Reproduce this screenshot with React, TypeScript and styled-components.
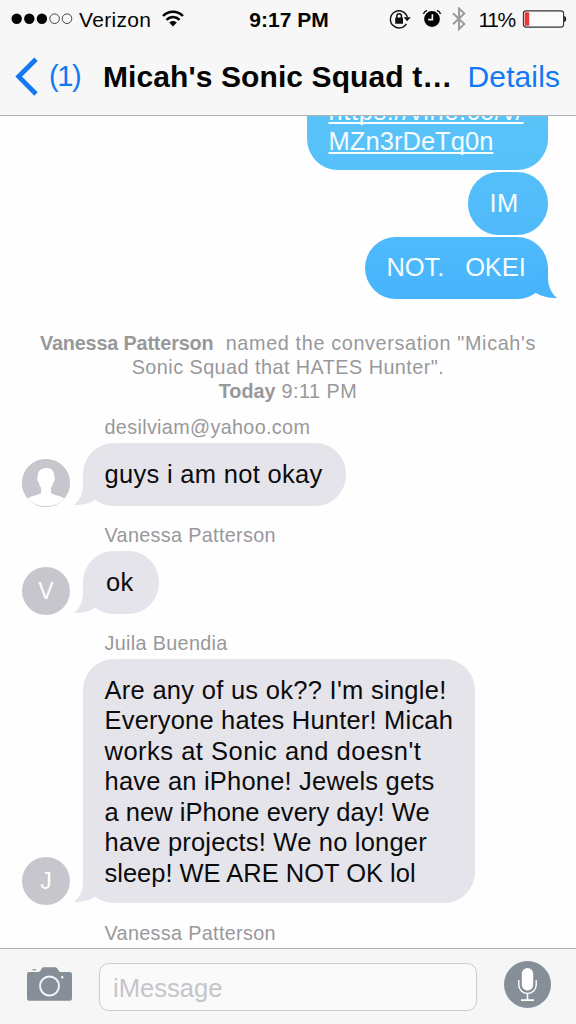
import React from "react";
import styled, { createGlobalStyle, css } from "styled-components";

const GlobalStyle = createGlobalStyle`
  * { box-sizing: border-box; }
  body {
    margin: 0;
    background: #fefefe;
    font-family: "Liberation Sans", Arial, sans-serif;
    color: #0b0b0d;
  }
`;

const BLUE = "#1279f2";
const GREY = "#e5e4ea";

const Screen = styled.div`
  width: 576px;
  height: 1024px;
  display: flex;
  flex-direction: column;
  overflow: hidden;
  background: #fefefe;
`;

const Header = styled.header`
  flex: none;
  height: 116px;
  background: #f7f7f7;
  border-bottom: 1px solid #b0b0b2;
`;

const StatusBar = styled.div`
  height: 38px;
  display: grid;
  grid-template-columns: 1fr auto 1fr;
  align-items: center;
  padding: 0 9px 0 11px;
  font-size: 21px;
  line-height: 37px;
  color: #050505;
`;

const StatusGroup = styled.div<{ $end?: boolean }>`
  display: flex;
  align-items: center;
  height: 37px;
  justify-content: ${(p) => (p.$end ? "flex-end" : "flex-start")};
  svg { flex: none; display: block; }
`;

const StatusIcons = styled.div`
  display: flex;
  align-items: center;
  gap: 10.5px;
`;

const Carrier = styled.span`
  margin: 0 11px 0 6px;
  letter-spacing: 0.3px;
`;

const Clock = styled.span`
  font-weight: bold;
  font-size: 21px;
`;

const Percent = styled.span`
  margin: 0 7px 0 12px;
  letter-spacing: -1.3px;
`;

const NavBar = styled.nav`
  height: 77px;
  display: flex;
  align-items: center;
  padding: 0 16px 0 14px;
  font-size: 30px;
  line-height: 77px;
  white-space: nowrap;
`;

const BackButton = styled.a`
  display: flex;
  align-items: center;
  width: 89px;
  gap: 10px;
  color: ${BLUE};
  svg { display: block; }
`;

const Count = styled.span`
  font-size: 29px;
  letter-spacing: -1.4px;
`;

const Title = styled.h1`
  margin: 0;
  flex: 1;
  font-size: 30px;
  font-weight: bold;
  letter-spacing: 0.1px;
  color: #050505;
`;

const DetailsLink = styled.a`
  color: ${BLUE};
  letter-spacing: 0.1px;
`;

const Thread = styled.main`
  flex: 1;
  min-height: 0;
  overflow: hidden;
  display: flex;
  flex-direction: column;
`;

const Sent = styled.section`
  display: flex;
  flex-direction: column;
  align-items: flex-end;
  gap: 2.2px;
  margin-top: -39px;
  padding-right: 28px;
`;

const Bubble = styled.div<{ $w: number; $bg: string; $sent?: boolean; $pad?: number }>`
  position: relative;
  width: ${(p) => p.$w}px;
  padding: 15.5px 0 ${(p) => (p.$sent ? 16.5 : 15)}px ${(p) => p.$pad ?? 21.5}px;
  min-height: 62.5px;
  border-radius: 31px;
  background: ${(p) => p.$bg};
  color: ${(p) => (p.$sent ? "#f6fcff" : "#0b0b0d")};
  font-size: 25.5px;
  line-height: 30.5px;
  white-space: pre;
`;

const LinkBubble = styled(Bubble)`
  padding-top: 18.5px;
  padding-bottom: 13.5px;
`;

const Line = styled.div<{ $ls?: number }>`
  letter-spacing: ${(p) => p.$ls ?? 0.3}px;
`;

const LinkLine = styled(Line)`
  text-decoration: underline;
  text-decoration-thickness: 1.5px;
  text-underline-offset: 2px;
  text-decoration-skip-ink: none;
`;

const TailSvg = styled.svg<{ $sent?: boolean }>`
  position: absolute;
  bottom: 0;
  display: block;
  ${(p) =>
    p.$sent
      ? css`right: -10px; transform: scaleX(-1);`
      : css`left: -10px;`}
`;

const Notice = styled.p`
  margin: 33px 0 16px;
  font-size: 19.8px;
  line-height: 23.6px;
  color: #98989b;
  text-align: center;
  white-space: pre;
`;

const NoticeText = styled.span<{ $ls: number }>`
  letter-spacing: ${(p) => p.$ls}px;
`;

const Strong = styled.b<{ $ls: number }>`
  letter-spacing: ${(p) => p.$ls}px;
`;

const Group = styled.section`
  margin-bottom: 21.5px;
`;

const Sender = styled.div`
  height: 24px;
  padding-left: 104.5px;
  font-size: 19.8px;
  line-height: 16px;
  color: #98989b;
  letter-spacing: 0.34px;
`;

const Row = styled.div`
  display: flex;
  align-items: flex-end;
  gap: 13px;
  padding-left: 22px;
`;

const Avatar = styled.div`
  flex: none;
  width: 48px;
  height: 48px;
  margin-bottom: -1.5px;
  border-radius: 50%;
  overflow: hidden;
  background: #c7c6cc;
  color: #fff;
  font-size: 23px;
  line-height: 48px;
  text-align: center;
  svg { display: block; }
`;

const Composer = styled.footer`
  flex: none;
  height: 76px;
  display: flex;
  align-items: center;
  padding: 0 25px 4px 27px;
  border-top: 1px solid #b0b0b2;
  background: #f6f6f6;
  svg { flex: none; display: block; }
`;

const Field = styled.div`
  width: 378px;
  height: 48px;
  margin: 4px 27px 0 27px;
  padding-left: 13px;
  border: 1.5px solid #cbcbce;
  border-radius: 10px;
  background: #fafafa;
  color: #c5c5c9;
  font-size: 25.6px;
  line-height: 49px;
`;

const Tail = ({ sent, color }: { sent?: boolean; color: string }) => (
  <TailSvg $sent={sent} width="30" height="34" viewBox="0 0 30 34">
    <path
      d="M10 2 V12 C10 21 7 28 1 33 C9 33.2 16 31.6 22 28 L30 20 Z"
      fill={color}
    />
  </TailSvg>
);

const Signal = () => (
  <svg width="62" height="14" viewBox="0 0 62 14">
    {[5.7, 18.3, 30.9].map((x) => (
      <circle key={x} cx={x} cy="6.7" r="5.2" fill="#050505" />
    ))}
    {[43.6, 56].map((x) => (
      <circle key={x} cx={x} cy="6.7" r="4.8" fill="none" stroke="#333" strokeWidth="0.9" />
    ))}
  </svg>
);

const Wifi = () => (
  <svg width="22" height="18" viewBox="0 0 22 18">
    <g fill="none" stroke="#050505" strokeWidth="2.4">
      <path d="M1 6 C6.6 0.3 15.4 0.3 21 6" />
      <path d="M4.4 9.8 C8.2 6 13.8 6 17.6 9.8" />
    </g>
    <path d="M7.2 12.4 C9.5 10.4 12.5 10.4 14.8 12.4 L11 16.4 Z" fill="#050505" />
  </svg>
);

const RotationLock = () => (
  <svg width="22" height="22" viewBox="0 0 22 22">
    <path d="M17.4 15.8 A8.6 8.6 0 1 1 18.4 9.4" fill="none" stroke="#111" strokeWidth="1.4" />
    <path d="M14.6 9.2 H21.8 L18.2 13.2 Z" fill="#111" />
    <rect x="6.2" y="9.6" width="7.8" height="6.2" rx="0.6" fill="#111" />
    <path d="M7.8 10 V8 a2.3 2.3 0 0 1 4.6 0 V10" fill="none" stroke="#111" strokeWidth="1.5" />
  </svg>
);

const Alarm = () => (
  <svg width="20" height="20" viewBox="0 0 20 20">
    <circle cx="10" cy="10" r="7.9" fill="#050505" />
    <path d="M1.4 5 C2 3.2 3.2 2 5 1.5 M18.6 5 C18 3.2 16.8 2 15 1.5" fill="none" stroke="#111" strokeWidth="1.4" />
    <path d="M10.4 5.2 V10.6 H6.2" fill="none" stroke="#f7f7f7" strokeWidth="1.6" />
  </svg>
);

const Bluetooth = () => (
  <svg width="14" height="24" viewBox="0 0 14 24">
    <path d="M1 6.3 L12.3 17 L7 22.1 V1.5 L12.3 6.6 L1 17.3" fill="none" stroke="#9b9b9b" strokeWidth="2" />
  </svg>
);

const Battery = () => (
  <svg width="45" height="18" viewBox="0 0 45 18">
    <rect x="1.4" y="0.9" width="40.2" height="16.2" rx="2.6" fill="#fbfbfb" stroke="#333" strokeWidth="1.1" />
    <rect x="2.6" y="2.3" width="4.6" height="13.4" rx="0.8" fill="#e8383a" />
    <path d="M42.2 6 C44.8 6 44.8 12 42.2 12 Z" fill="#111" />
  </svg>
);

const Chevron = () => (
  <svg width="25" height="40" viewBox="0 0 25 40">
    <path d="M22 2.2 L4.7 19.6 L22 37" fill="none" stroke={BLUE} strokeWidth="4.8" />
  </svg>
);

const Person = () => (
  <svg width="48" height="48" viewBox="0 0 48 48">
    <circle cx="24" cy="24" r="24" fill="#c7c6cc" />
    <path
      d="M24 9 C29.5 8.6 32.6 12 32.3 18 C33.5 18.6 32.8 22.6 31.4 23.2 C31 26 30 27.6 29 28.8 V33.5 C31 36.5 39 36.6 42.3 39.5 C38 44.6 31.5 47.2 24 47.2 C16.5 47.2 10 44.6 5.8 39.5 C9 36.6 17.2 36.5 19.2 33.5 V28.8 C18 27.6 17.2 26 16.8 23.2 C15.2 22.6 14.6 18.6 15.8 18 C15.4 12 18.5 9.4 24 9 Z"
      fill="#fff"
    />
  </svg>
);

const Camera = () => (
  <svg width="45" height="35" viewBox="0 0 45 35">
    <path d="M5.5 3.4 V2.2 H9 V3.4 Z" fill="#868e98" />
    <path
      d="M2.2 5 H11 C13 5 13.6 3.4 14.4 2 C15 0.9 15.8 0.3 17 0.3 H28 C29.2 0.3 30 0.9 30.6 2 C31.4 3.4 32 5 34 5 H42.8 Q45 5 45 7.2 V31.5 Q45 33.7 42.8 33.7 H2.2 Q0 33.7 0 31.5 V7.2 Q0 5 2.2 5 Z"
      fill="#868e98"
    />
    <circle cx="22.5" cy="19" r="9.5" fill="none" stroke="#f4f6fa" strokeWidth="1.9" />
    <circle cx="35.2" cy="10.3" r="1.2" fill="#f4f6fa" />
  </svg>
);

const Mic = () => (
  <svg width="47" height="47" viewBox="0 0 47 47">
    <circle cx="23.5" cy="23.5" r="23.5" fill="#868e98" />
    <rect x="17.8" y="7" width="11.4" height="22.4" rx="5.7" fill="#fff" />
    <path d="M14.8 19 V24 a8.7 8.4 0 0 0 17.4 0 V19" fill="none" stroke="#fff" strokeWidth="1.4" />
    <path d="M23.5 32.4 V39 M17 39.1 H30" fill="none" stroke="#fff" strokeWidth="1.6" />
  </svg>
);

const longMessage: [string, number][] = [
  ["Are any of us ok?? I'm single!", 0.28],
  ["Everyone hates Hunter! Micah", 0.2],
  ["works at Sonic and doesn't", 0.5],
  ["have an iPhone! Jewels gets", 0.2],
  ["a new iPhone every day! We", 0.04],
  ["have projects! We no longer", 0.2],
  ["sleep! WE ARE NOT OK lol", -0.01],
];

export default function App() {
  return (
    <Screen>
      <GlobalStyle />
      <Header>
        <StatusBar>
          <StatusGroup>
            <Signal />
            <Carrier>Verizon</Carrier>
            <Wifi />
          </StatusGroup>
          <Clock>9:17 PM</Clock>
          <StatusGroup $end>
            <StatusIcons>
              <RotationLock />
              <Alarm />
              <Bluetooth />
            </StatusIcons>
            <Percent>11%</Percent>
            <Battery />
          </StatusGroup>
        </StatusBar>
        <NavBar>
          <BackButton>
            <Chevron />
            <Count>(1)</Count>
          </BackButton>
          <Title>Micah's Sonic Squad t…</Title>
          <DetailsLink>Details</DetailsLink>
        </NavBar>
      </Header>

      <Thread>
        <Sent>
          <LinkBubble $w={241} $sent $bg="linear-gradient(#5cc6f8, #56c0f9)">
            <LinkLine $ls={0.6}>https://vine.co/v/</LinkLine>
            <LinkLine $ls={0.05}>MZn3rDeTq0n</LinkLine>
          </LinkBubble>
          <Bubble $w={80} $sent $bg="linear-gradient(#55bffa, #50bafa)">
            <Line>IM</Line>
          </Bubble>
          <Bubble $w={183} $sent $bg="linear-gradient(#4fbafb, #47b3fc)">
            <Line $ls={-0.1}>NOT.   OKEI</Line>
            <Tail sent color="#48b4fc" />
          </Bubble>
        </Sent>

        <Notice>
          <Strong $ls={-0.15}>Vanessa Patterson</Strong>
          <NoticeText $ls={0.65}>{"  named the conversation \"Micah's"}</NoticeText>
          <br />
          <NoticeText $ls={0.47}>Sonic Squad that HATES Hunter".</NoticeText>
          <br />
          <Strong $ls={0}>Today</Strong>
          <NoticeText $ls={0.5}> 9:11 PM</NoticeText>
        </Notice>

        <Group>
          <Sender>desilviam@yahoo.com</Sender>
          <Row>
            <Avatar><Person /></Avatar>
            <Bubble $w={263} $bg={GREY}>
              <Line>guys i am not okay</Line>
              <Tail color={GREY} />
            </Bubble>
          </Row>
        </Group>

        <Group>
          <Sender>Vanessa Patterson</Sender>
          <Row>
            <Avatar>V</Avatar>
            <Bubble $w={75.5} $bg={GREY} $pad={23}>
              <Line>ok</Line>
              <Tail color={GREY} />
            </Bubble>
          </Row>
        </Group>

        <Group>
          <Sender>Juila Buendia</Sender>
          <Row>
            <Avatar>J</Avatar>
            <Bubble $w={392} $bg={GREY}>
              {longMessage.map(([text, ls]) => (
                <Line key={text} $ls={ls}>{text}</Line>
              ))}
              <Tail color={GREY} />
            </Bubble>
          </Row>
        </Group>

        <Group>
          <Sender>Vanessa Patterson</Sender>
        </Group>
      </Thread>

      <Composer>
        <Camera />
        <Field>iMessage</Field>
        <Mic />
      </Composer>
    </Screen>
  );
}
